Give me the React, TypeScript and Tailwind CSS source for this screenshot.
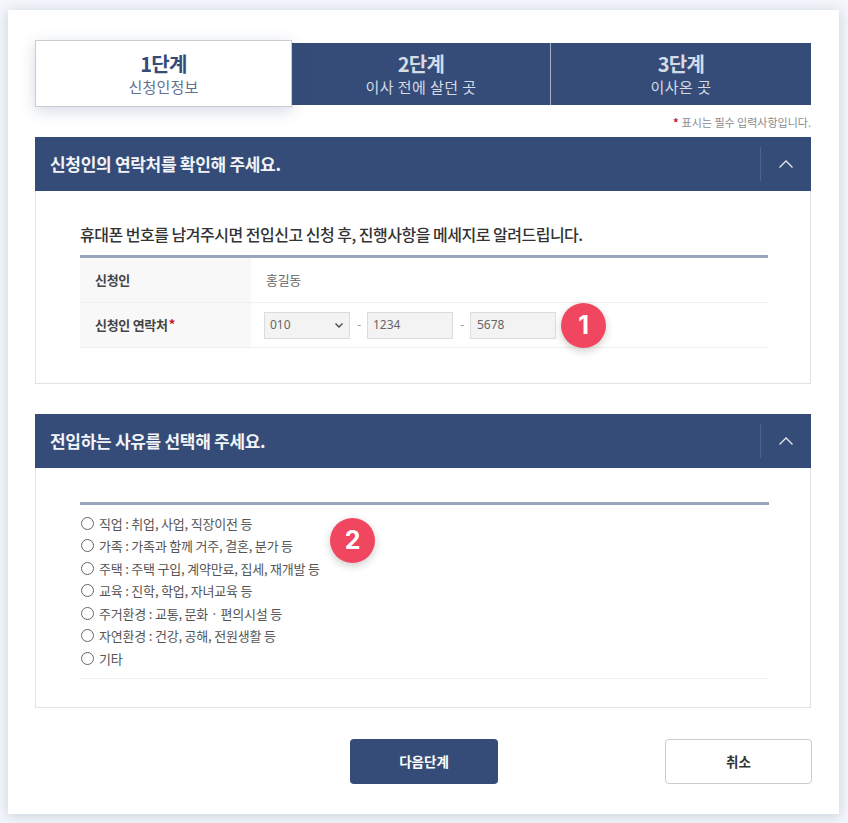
import React from "react";

const font = { fontFamily: '"Noto Sans CJK KR", "Noto Sans", sans-serif' };
const reasons = [
  "직업 : 취업, 사업, 직장이전 등",
  "가족 : 가족과 함께 거주, 결혼, 분가 등",
  "주택 : 주택 구입, 계약만료, 집세, 재개발 등",
  "교육 : 진학, 학업, 자녀교육 등",
  "주거환경 : 교통, 문화 · 편의시설 등",
  "자연환경 : 건강, 공해, 전원생활 등",
  "기타",
];

function SectionHeader({ title }: { title: string }) {
  return (
    <div className="h-[54px] bg-[#344c77] flex items-center justify-between pl-[15px]">
      <h2 className="text-[17px] font-bold text-[#f2f4f8] tracking-[-0.3px]">{title}</h2>
      <div className="w-[51px] h-[34px] border-l border-[#4d6389] flex items-center justify-center">
        <svg width="16" height="10" viewBox="0 0 16 10" fill="none" stroke="#e4e8ef" strokeWidth="1.3">
          <path d="M1.5 8.5 8 2l6.5 6.5" />
        </svg>
      </div>
    </div>
  );
}

function Badge({ n, className }: { n: string; className: string }) {
  return (
    <div
      className={`absolute w-[45px] h-[45px] rounded-full bg-[#f1465f] text-white flex items-center justify-center text-[25px] font-bold shadow-[0_3px_8px_rgba(0,0,0,0.2)] ${className}`}
      style={{ fontFamily: '"Inter", sans-serif' }}
    >
      {n}
    </div>
  );
}

function Tab({ step, label, last }: { step: string; label: string; last?: boolean }) {
  return (
    <div className={`h-[62px] bg-[#344c77] flex flex-col items-center justify-center text-[#d5dbe6] ${last ? "w-[260px]" : "w-[259px] border-r border-[#a3afc4]"}`}>
      <div className="text-[20px] font-bold leading-[25px] tracking-[-0.7px]">{step}</div>
      <div className="text-[15px] leading-[21px] tracking-[0.45px]">{label}</div>
    </div>
  );
}

export default function App() {
  return (
    <div className="min-h-[823px] bg-[#f3f6fb] pt-[10px] pl-[8px] overflow-hidden" style={font}>
      <div className="w-[831px] h-[804px] bg-white px-[27px] pt-[30px] shadow-[0_2px_12px_rgba(60,70,100,0.22)]">
        <div className="flex items-center w-[776px]">
          <div className="w-[257px] h-[67px] bg-white border border-[#c9ccd3] flex flex-col items-center justify-center shadow-[0_4px_14px_rgba(60,80,130,0.22)] relative">
            <div className="text-[20px] font-bold leading-[25px] text-[#344c77] tracking-[-0.7px]">1단계</div>
            <div className="text-[15px] leading-[21px] text-[#5f7190] tracking-[0.2px]">신청인정보</div>
          </div>
          <Tab step="2단계" label="이사 전에 살던 곳" />
          <Tab step="3단계" label="이사온 곳" last />
        </div>

        <div className="h-[30px] w-[776px] flex items-center justify-end text-[11px] text-[#8b8b8b]">
          <span className="text-[#c8102e] font-bold mr-[3px]">*</span>표시는 필수 입력사항입니다.
        </div>

        <section className="w-[776px]">
          <SectionHeader title="신청인의 연락처를 확인해 주세요." />
          <div className="h-[193px] border border-t-0 border-[#e2e2e2] pl-[44px] pr-[42px] pt-[32px]">
            <p className="text-[16px] font-medium leading-[22px] text-[#333] tracking-[-0.5px]">
              휴대폰 번호를 남겨주시면 전입신고 신청 후, 진행사항을 메세지로 알려드립니다.
            </p>
            <div className="mt-[10px] border-t-[3px] border-[#98a5bd] relative text-[13px] text-[#555] tracking-[-0.3px]">
              <div className="flex h-[45px] border-b border-[#f0f0f0]">
                <div className="w-[171px] bg-[#f8f8f8] pl-[15px] flex items-center font-bold text-[#444]">신청인</div>
                <div className="pl-[15px] flex items-center text-[#666]">홍길동</div>
              </div>
              <div className="flex h-[45px] border-b border-[#f0f0f0]">
                <div className="w-[171px] bg-[#f8f8f8] pl-[15px] flex items-center font-bold text-[#444]">
                  신청인 연락처<span className="text-[#c8102e] ml-[1px] -mt-[3px]">*</span>
                </div>
                <div className="pl-[13px] flex items-center text-[12px] text-[#666] tracking-normal gap-[17px] relative" style={{ fontFamily: '"Noto Sans", sans-serif' }}>
                  <div className="w-[86px] h-[27px] bg-[#f3f3f3] border border-[#dcdcdc] flex items-center justify-between pl-[5px] pr-[5px] relative">
                    <span>010</span>
                    <svg width="10" height="7" viewBox="0 0 10 7" fill="none" stroke="#444" strokeWidth="1.3">
                      <path d="M1.5 1.5 5 5l3.5-3.5" />
                    </svg>
                    <span className="absolute -right-[12px] text-[#999]">-</span>
                  </div>
                  <div className="w-[86px] h-[27px] bg-[#f3f3f3] border border-[#dcdcdc] flex items-center pl-[5px] relative">
                    1234
                    <span className="absolute -right-[12px] text-[#999]">-</span>
                  </div>
                  <div className="w-[86px] h-[27px] bg-[#f3f3f3] border border-[#dcdcdc] flex items-center pl-[6px]">5678</div>
                </div>
              </div>
              <Badge n="1" className="left-[481px] top-[45px]" />
            </div>
          </div>
        </section>

        <section className="w-[776px] mt-[30px]">
          <SectionHeader title="전입하는 사유를 선택해 주세요." />
          <div className="h-[240px] border border-t-0 border-[#e2e2e2] pl-[44px] pr-[41px] pt-[34px]">
            <div className="border-t-[3px] border-[#98a5bd] border-b border-b-[#f0f0f0] h-[177px] pt-[7px] relative">
              {reasons.map((r) => (
                <div key={r} className="h-[22.5px] flex items-center text-[13px] text-[#555] tracking-[-0.2px]">
                  <span className="w-[13px] h-[13px] rounded-full border border-[#666] bg-white ml-[1px] mr-[5px] shrink-0" />
                  {r}
                </div>
              ))}
              <Badge n="2" className="left-[250px] top-[13px]" />
            </div>
          </div>
        </section>

        <div className="w-[777px] mt-[31px] flex items-start pl-[315px] justify-between">
          <button className="w-[148px] h-[45px] rounded-[4px] bg-[#344c77] text-white text-[13.5px] font-bold">다음단계</button>
          <button className="w-[147px] h-[45px] rounded-[4px] bg-white border border-[#cccccc] text-[#333] text-[13.5px] font-bold">취소</button>
        </div>
      </div>
    </div>
  );
}
